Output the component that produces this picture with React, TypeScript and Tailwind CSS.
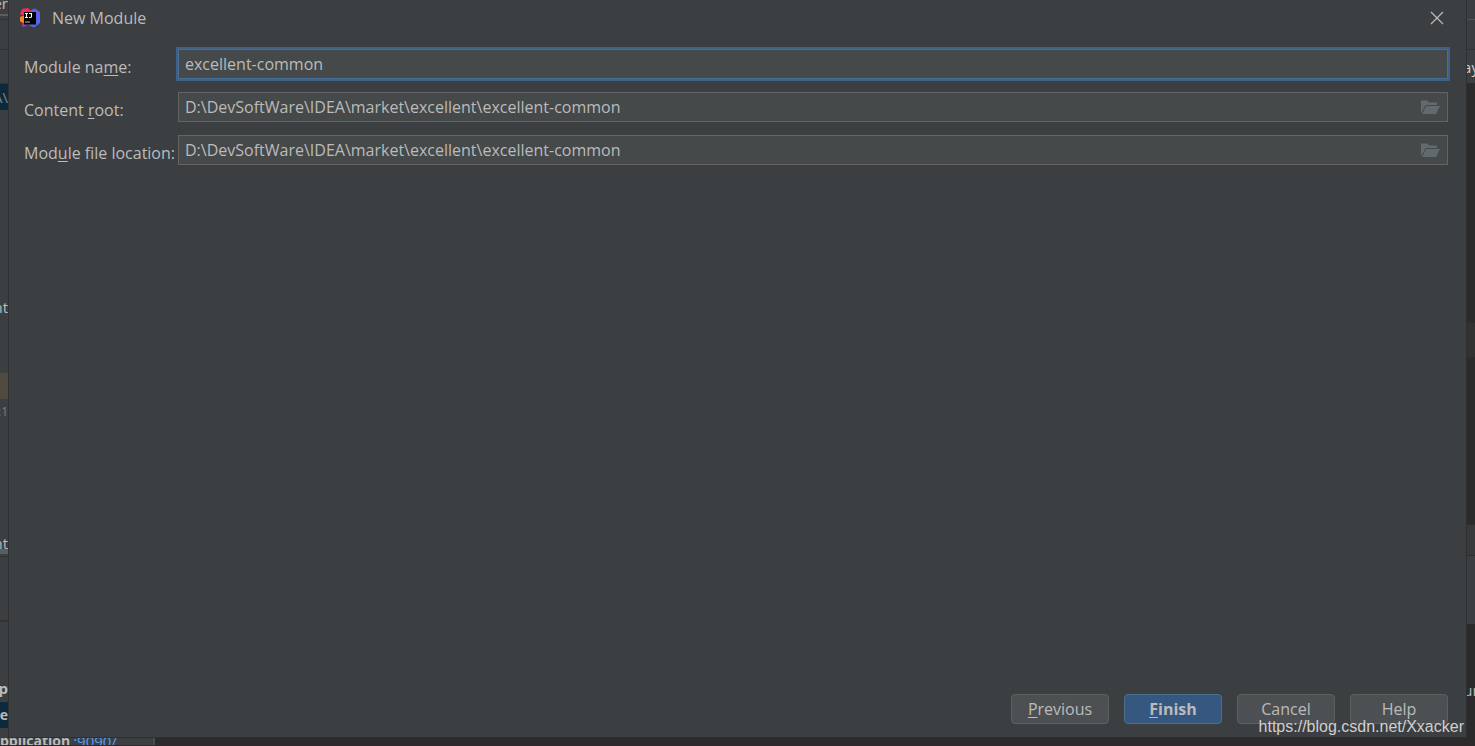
import { useState } from "react"
import type { ReactNode } from "react"

type Slice = { className: string; text?: string }

// pieces of the IDE window that stick out to the left of the dialog
const leftSlices: Slice[] = [
  { className: "h-[14px] leading-[6px] text-[#bbbbbb]", text: "er" },
  { className: "h-[2px] bg-[#5b5e60]" },
  { className: "h-[3px]" },
  { className: "h-px bg-[#323232]" },
  { className: "h-[29px]" },
  { className: "h-px bg-[#323232]" },
  { className: "h-[33px]" },
  { className: "h-px bg-[#323232]" },
  { className: "h-[26px] bg-[#0d293e] leading-[26px] text-[#7b8388]", text: "A\\" },
  { className: "h-[185px]" },
  { className: "h-[26px] leading-6 text-[#bbbbbb]", text: "nt" },
  { className: "h-[52px]" },
  { className: "h-[26px] bg-[#4f4b41]" },
  { className: "h-[26px] text-xs leading-[26px] text-[#7a7d80]", text: ":1" },
  { className: "h-[106px]" },
  { className: "h-[18px] leading-6 text-[#bbbbbb]", text: "nt" },
  { className: "h-[5px] bg-[#5b5e60]" },
  { className: "h-[2px]" },
  { className: "h-px bg-[#323232]" },
  { className: "h-[63px]" },
  { className: "h-[2px] bg-[#323232]" },
  { className: "h-[54px]" },
  { className: "h-[26px] leading-6 font-bold text-[#bbbbbb]", text: "p" },
  { className: "h-[26px] bg-[#0d293e] text-sm leading-[26px] font-bold text-[#bbbbbb]", text: "ce" },
]

// and to the right of it
const rightSlices: Slice[] = [
  { className: "h-[19px] bg-[#3c3f41]" },
  { className: "h-px bg-[#555555]" },
  { className: "h-[29px] bg-[#3c3f41]" },
  { className: "h-px bg-[#323232]" },
  { className: "h-[33px] bg-[#3c3f41] leading-[34px] text-[#d0d0d0]", text: "ay" },
  { className: "h-[240px]" },
  { className: "h-[34px] bg-[#323232]" },
  { className: "h-[168px]" },
  { className: "h-[30px] bg-[#37393b]" },
  { className: "h-px bg-[#2b2b2b]" },
  { className: "h-[68px] bg-[#3c3f41]" },
  { className: "h-[54px]" },
  { className: "h-[26px] leading-6 text-[#a9b7c6]", text: "ur" },
]

function Strip({ slices, className }: { slices: Slice[]; className: string }) {
  return (
    <div className={`flex w-2 shrink-0 flex-col overflow-hidden text-[15px] ${className}`}>
      {slices.map((s, i) => (
        <div key={i} className={`flex shrink-0 overflow-hidden whitespace-nowrap ${s.className}`}>
          {s.text}
        </div>
      ))}
    </div>
  )
}

function Key({ children }: { children: ReactNode }) {
  return <span className="underline decoration-1 underline-offset-2">{children}</span>
}

function IdeaLogo() {
  return (
    <svg viewBox="0 0 20 20" className="size-5">
      <defs>
        <linearGradient id="idea-blue" x1="0" y1="0" x2="1" y2="1">
          <stop offset="0" stopColor="#2f7bf5" />
          <stop offset="0.5" stopColor="#6b57e8" />
          <stop offset="1" stopColor="#2f7bf5" />
        </linearGradient>
        <linearGradient id="idea-pink" x1="0" y1="0" x2="0" y2="1">
          <stop offset="0" stopColor="#fe2857" />
          <stop offset="0.6" stopColor="#e0317f" />
          <stop offset="1" stopColor="#9039d0" />
        </linearGradient>
      </defs>
      <path d="M0 9L4 8L6 13L3 15L0 13Z" fill="#fc801d" />
      <path d="M11 2L15 0.5L20 4L20 15L14 19.5L8 17Z" fill="url(#idea-blue)" />
      <path d="M2 1L8 0L12 4L9 16L4 19L2 18L3 14L4 8L0 6Z" fill="url(#idea-pink)" />
      <path d="M0 9L4 8V14L3 15L0 13Z" fill="#fc801d" />
      <rect x="4" y="4" width="12" height="12.5" fill="#000" />
      <path d="M5 5.5H8M6.5 5.5V9.5M5 9.5H8M9 5.5H12M11.5 5.5V8.5Q11.5 9.5 10 9.5H9" stroke="#fff" strokeWidth="1.1" fill="none" />
      <path d="M5 14H10" stroke="#bbb" strokeWidth="1" />
    </svg>
  )
}

function FolderIcon() {
  return (
    <svg viewBox="0 0 19 15" className="h-[15px] w-[19px]" fill="#626a6e">
      <path d="M0 0.5H6L8 2.5H16V5H4.5L0.5 12.5H0Z" />
      <path d="M5 6H19L15 14H1Z" />
    </svg>
  )
}

const fieldBox = "flex h-[30px] min-w-0 items-center border bg-[#45494a]"
const fieldInput = "h-full min-w-0 flex-1 bg-transparent px-1.5 text-[#bbbbbb] outline-none"
const labelStyle = "h-[30px] leading-9 whitespace-nowrap"
const buttonStyle = "h-[30px] w-[98px] rounded border"

export default function App() {
  const [name, setName] = useState("excellent-common")
  const [root, setRoot] = useState("D:\\DevSoftWare\\IDEA\\market\\excellent\\excellent-common")
  const [location, setLocation] = useState("D:\\DevSoftWare\\IDEA\\market\\excellent\\excellent-common")

  return (
    <div className="relative flex h-screen flex-col overflow-hidden bg-[#2b2b2b] font-['Open_Sans',sans-serif] text-[16px] text-[#bbbbbb]">
      <div className="flex min-h-0 flex-1">
        <Strip slices={leftSlices} className="bg-[#3c3f41] [&>div]:justify-end" />

        <form
          role="dialog"
          aria-labelledby="dialog-title"
          onSubmit={(e) => e.preventDefault()}
          className="flex min-w-0 flex-1 flex-col border-x border-b border-[#2d2f30] bg-[#3c3f41]"
        >
          <header className="flex h-9 shrink-0 items-center pr-[22px] pl-[11px]">
            <IdeaLogo />
            <h1 id="dialog-title" className="ml-3 flex-1">New Module</h1>
            <button type="button" aria-label="Close">
              <svg viewBox="0 0 14 14" className="size-[14px]" stroke="#bbbbbb" strokeWidth="1.2">
                <path d="M1 1L13 13M13 1L1 13" />
              </svg>
            </button>
          </header>

          <div className="grid grid-cols-[154px_1fr] gap-y-[13px] pt-[13px] pr-[18px] pl-[15px]">
            <label htmlFor="module-name" className={labelStyle}>
              Module na<Key>m</Key>e:
            </label>
            <div className={`${fieldBox} border-[#466d94] ring-2 ring-[#3d6185]`}>
              <input id="module-name" value={name} onChange={(e) => setName(e.target.value)} className={fieldInput} />
            </div>

            <label htmlFor="content-root" className={labelStyle}>
              Content <Key>r</Key>oot:
            </label>
            <div className={`${fieldBox} border-[#646464]`}>
              <input id="content-root" value={root} onChange={(e) => setRoot(e.target.value)} className={fieldInput} />
              <button type="button" aria-label="Browse content root" className="px-[7px]">
                <FolderIcon />
              </button>
            </div>

            <label htmlFor="file-location" className={labelStyle}>
              Mod<Key>u</Key>le file location:
            </label>
            <div className={`${fieldBox} border-[#646464]`}>
              <input id="file-location" value={location} onChange={(e) => setLocation(e.target.value)} className={fieldInput} />
              <button type="button" aria-label="Browse module file location" className="px-[7px]">
                <FolderIcon />
              </button>
            </div>
          </div>

          <footer className="mt-auto flex justify-end gap-[15px] pr-[18px] pb-[13px]">
            <button type="button" className={`${buttonStyle} border-[#5e6060] bg-[#4c5052]`}>
              <Key>P</Key>revious
            </button>
            <button type="submit" className={`${buttonStyle} border-[#4c708c] bg-[#365880] font-bold`}>
              <Key>F</Key>inish
            </button>
            <button type="button" className={`${buttonStyle} border-[#5e6060] bg-[#4c5052]`}>Cancel</button>
            <button type="button" className={`${buttonStyle} border-[#5e6060] bg-[#4c5052]`}>Help</button>
          </footer>
        </form>

        <Strip slices={rightSlices} className="[&>div]:justify-center" />
      </div>

      {/* run panel showing under the dialog */}
      <div className="flex h-2 shrink-0 overflow-hidden border-b border-[#33262c]">
        <div className="flex w-[155px] gap-[3px] overflow-hidden border-r-2 border-[#4a4d4f] bg-[#3c3f41] text-[15px] leading-[6px] whitespace-nowrap">
          <span className="text-sm leading-[6px] font-bold">pplication</span>
          <a href="#run" className="text-[#589df6]">:9090/</a>
        </div>
      </div>

      <p className="pointer-events-none absolute right-[11px] bottom-[7px] font-['Liberation_Sans',sans-serif] text-[16px] leading-6 text-[#d0d0d0]">
        https://blog.csdn.net/Xxacker
      </p>
    </div>
  )
}
